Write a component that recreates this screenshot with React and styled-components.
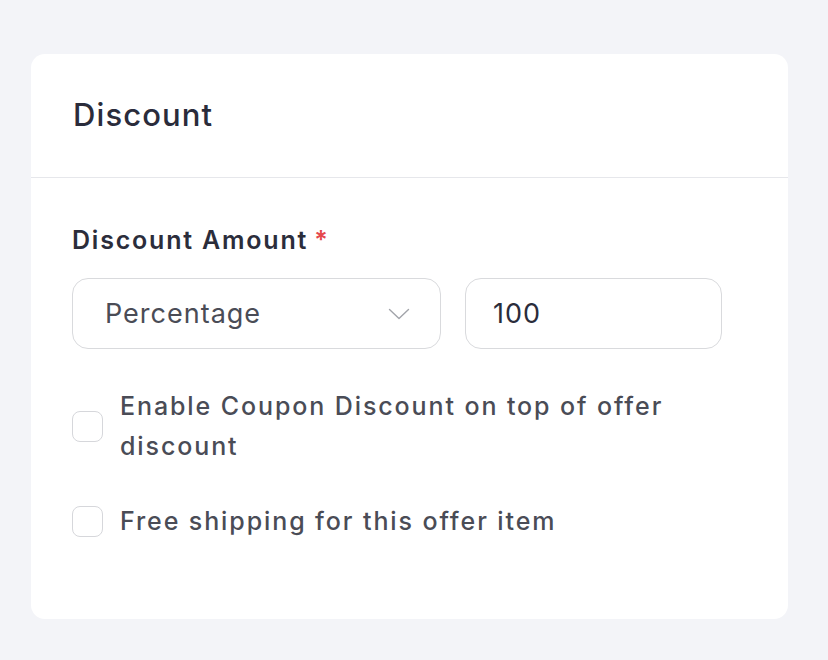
import React from "react";
import styled, { createGlobalStyle } from "styled-components";

const Global = createGlobalStyle`
  html, body { margin: 0; padding: 0; background: #f3f4f8; }
  body { font-family: Inter, "Noto Sans", sans-serif; -webkit-font-smoothing: antialiased; }
  * { box-sizing: border-box; }
`;

const Page = styled.div`
  width: 828px;
  height: 660px;
  padding: 54px 40px 0 31px;
`;

const Card = styled.section`
  width: 757px;
  height: 565px;
  background: #ffffff;
  border-radius: 14px;
  display: flex;
  flex-direction: column;
`;

const Header = styled.header`
  height: 124px;
  padding: 0 42px 2px;
  display: flex;
  align-items: center;
  border-bottom: 1px solid #e6e7eb;
`;

const Title = styled.h2`
  margin: 0;
  font-size: 31px;
  font-weight: 500;
  color: #2a2c3b;
  letter-spacing: 1.1px;
`;

const Body = styled.div`
  padding: 47px 41px 0 41px;
  display: flex;
  flex-direction: column;
`;

const Label = styled.label`
  font-size: 25px;
  font-weight: 600;
  color: #2b2d3b;
  line-height: 30px;
  letter-spacing: 1.8px;
`;

const Required = styled.span`
  color: #e5484d;
  margin-left: 6px;
`;

const FieldRow = styled.div`
  display: flex;
  gap: 24px;
  margin-top: 23px;
`;

const Field = styled.div`
  width: ${(p) => p.$w}px;
  height: 71px;
  border: 1.5px solid #d9dadd;
  border-radius: 16px;
  display: flex;
  align-items: center;
  justify-content: space-between;
  padding: 0 ${(p) => p.$pr}px 0 ${(p) => p.$pl}px;
  font-size: 27px;
  color: ${(p) => p.$color};
  letter-spacing: 1px;
`;

const Chevron = () => (
  <svg width="22" height="12" viewBox="0 0 22 12" fill="none">
    <path d="M1.5 1.5l9.5 9l9.5-9" stroke="#a2a4aa" strokeWidth="1.4" strokeLinecap="round" strokeLinejoin="round" />
  </svg>
);

const CheckList = styled.div`
  display: flex;
  flex-direction: column;
  gap: 35px;
  margin-top: 37px;
`;

const CheckRow = styled.label`
  display: flex;
  align-items: center;
  gap: 17px;
`;

const Box = styled.span`
  flex: none;
  width: 31px;
  height: 31px;
  border: 1.5px solid #d6d7db;
  border-radius: 8px;
  background: #fff;
`;

const CheckText = styled.span`
  font-size: 25px;
  line-height: 40px;
  font-weight: 500;
  color: #4a4c56;
  max-width: 580px;
  letter-spacing: 1.9px;
`;

export default function App() {
  return (
    <>
      <Global />
      <Page>
        <Card>
          <Header>
            <Title>Discount</Title>
          </Header>
          <Body>
            <Label>
              Discount Amount<Required>*</Required>
            </Label>
            <FieldRow>
              <Field $w={369} $pl={32} $pr={30} $color="#4a4c56">
                <span>Percentage</span>
                <Chevron />
              </Field>
              <Field $w={257} $pl={27} $pr={20} $color="#2a2c3b">
                <span>100</span>
              </Field>
            </FieldRow>
            <CheckList>
              <CheckRow>
                <Box />
                <CheckText>Enable Coupon Discount on top of offer discount</CheckText>
              </CheckRow>
              <CheckRow>
                <Box />
                <CheckText>Free shipping for this offer item</CheckText>
              </CheckRow>
            </CheckList>
          </Body>
        </Card>
      </Page>
    </>
  );
}
